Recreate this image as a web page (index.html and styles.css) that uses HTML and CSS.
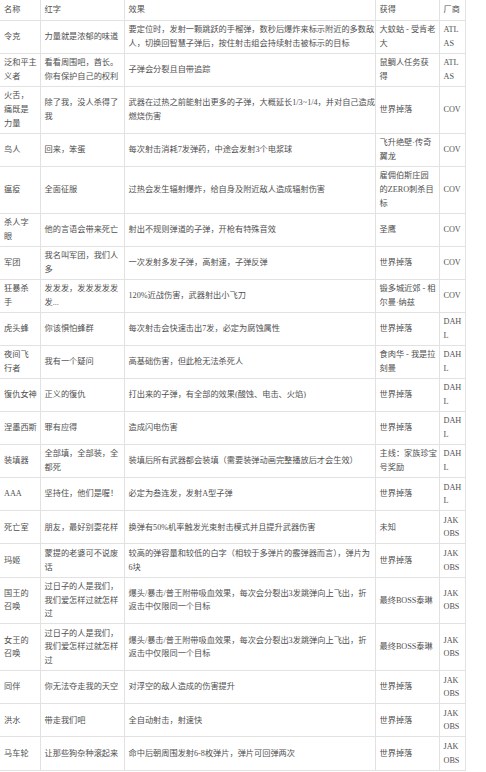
FILE: index.html
```html
<!DOCTYPE html>
<html lang="zh-CN">
<head>
<meta charset="utf-8">
<title>传奇武器</title>
<link rel="stylesheet" href="styles.css">
</head>
<body>
<table class="guns">
  <colgroup>
    <col class="c-name">
    <col class="c-red">
    <col class="c-effect">
    <col class="c-get">
    <col class="c-maker">
  </colgroup>
  <thead>
    <tr><th>名称</th><th>红字</th><th>效果</th><th>获得</th><th>厂商</th></tr>
  </thead>
  <tbody>
    <tr><td>令克</td><td>力量就是浓郁的味道</td><td>要定位时，发射一颗跳跃的手榴弹，数秒后爆炸来标示附近的多数敌<br>人，切换回智慧子弹后，按住射击组会持续射击被标示的目标</td><td>大蚊蛄 - 受肯老<br>大</td><td>ATL<br>AS</td></tr>
    <tr><td>泛和平主<br>义者</td><td>看看周围吧，酋长。<br>你有保护自己的权利</td><td>子弹会分裂且自带追踪</td><td>鼠鲷人任务获<br>得</td><td>ATL<br>AS</td></tr>
    <tr><td>火舌，<br>痛既是<br>力量</td><td>除了我，没人杀得了<br>我</td><td>武器在过热之前能射出更多的子弹，大概延长1/3~1/4，并对自己造成<br>燃烧伤害</td><td>世界掉落</td><td>COV</td></tr>
    <tr><td>鸟人</td><td>回来，笨蛋</td><td>每次射击消耗7发弹药，中途会发射3个电浆球</td><td>飞升绝壁·传奇<br>翼龙</td><td>COV</td></tr>
    <tr><td>瘟疫</td><td>全面征服</td><td>过热会发生辐射爆炸，给自身及附近敌人造成辐射伤害</td><td>雇佣伯斯庄园<br>的ZERO刺杀目<br>标</td><td>COV</td></tr>
    <tr><td>杀人字<br>眼</td><td>他的言语会带来死亡</td><td>射出不规则弹道的子弹，开枪有特殊音效</td><td>圣鹰</td><td>COV</td></tr>
    <tr><td>军团</td><td>我名叫军团，我们人<br>多</td><td>一次发射多发子弹，高射速，子弹反弹</td><td>世界掉落</td><td>COV</td></tr>
    <tr><td>狂暴杀<br>手</td><td>发发发，发发发发发<br>发...</td><td>120%近战伤害，武器射出小飞刀</td><td>锻多城近郊 - 相<br>尔曼·纳兹</td><td>COV</td></tr>
    <tr><td>虎头蜂</td><td>你该惧怕蜂群</td><td>每次射击会快速击出7发，必定为腐蚀属性</td><td>世界掉落</td><td>DAH<br>L</td></tr>
    <tr><td>夜间飞<br>行者</td><td>我有一个疑问</td><td>高基础伤害，但此枪无法杀死人</td><td>食肉华 - 我是拉<br>刻曼</td><td>DAH<br>L</td></tr>
    <tr><td>復仇女神</td><td>正义的復仇</td><td>打出来的子弹，有全部的效果(酸蚀、电击、火焰)</td><td>世界掉落</td><td>DAH<br>L</td></tr>
    <tr><td>涅墨西斯</td><td>罪有应得</td><td>造成闪电伤害</td><td>世界掉落</td><td>DAH<br>L</td></tr>
    <tr><td>装填器</td><td>全部填，全部装，全<br>都死</td><td>装填后所有武器都会装填（需要装弹动画完整播放后才会生效）</td><td>主线：家族珍宝<br>号奖励</td><td>DAH<br>L</td></tr>
    <tr><td>AAA</td><td>坚持住，他们是喔！</td><td>必定为叁连发，发射A型子弹</td><td>世界掉落</td><td>DAH<br>L</td></tr>
    <tr><td>死亡室</td><td>朋友，最好别耍花样</td><td>换弹有50%机率触发光束射击模式并且提升武器伤害</td><td>未知</td><td>JAK<br>OBS</td></tr>
    <tr><td>玛姬</td><td>蒙提的老婆可不说废<br>话</td><td>较高的弹容量和较低的白字（相较于多弹片的霰弹器而言），弹片为<br>6块</td><td>世界掉落</td><td>JAK<br>OBS</td></tr>
    <tr><td>国王的<br>召唤</td><td>过日子的人是我们，<br>我们爱怎样过就怎样<br>过</td><td>爆头/暴击/普王附带吸血效果，每次会分裂出3发跳弹向上飞出，折<br>返击中仅限同一个目标</td><td>最终BOSS泰琳</td><td>JAK<br>OBS</td></tr>
    <tr><td>女王的<br>召唤</td><td>过日子的人是我们，<br>我们爱怎样过就怎样<br>过</td><td>爆头/暴击/普王附带吸血效果，每次会分裂出3发跳弹向上飞出，折<br>返击中仅限同一个目标</td><td>最终BOSS泰琳</td><td>JAK<br>OBS</td></tr>
    <tr><td>同伴</td><td>你无法夺走我的天空</td><td>对浮空的敌人造成的伤害提升</td><td>世界掉落</td><td>JAK<br>OBS</td></tr>
    <tr><td>洪水</td><td>带走我们吧</td><td>全自动射击，射速快</td><td>世界掉落</td><td>JAK<br>OBS</td></tr>
    <tr><td>马车轮</td><td>让那些狗杂种滚起来</td><td>命中后朝周围发射6-8枚弹片，弹片可回弹两次</td><td>世界掉落</td><td>JAK<br>OBS</td></tr>
  </tbody>
</table>
</body>
</html>
```

FILE: styles.css
```css
html, body {
  margin: 0;
  padding: 0;
  background: #ffffff;
}

.guns {
  width: 465px;
  table-layout: fixed;
  border-collapse: collapse;
  font-family: "Liberation Serif", "Noto Sans CJK SC", serif;
  font-size: 8.2px;
  line-height: 13.85px;
  color: #505050;
}

.c-name { width: 40px; }
.c-red { width: 84px; }
.c-effect { width: 251px; }
.c-get { width: 64px; }
.c-maker { width: 26px; }

.guns th,
.guns td {
  border: 1px solid #e2e2e2;
  padding: 2.2px 4px;
  text-align: left;
  vertical-align: middle;
  white-space: nowrap;
  font-weight: normal;
}

.guns th {
  padding-top: 3px;
  padding-bottom: 3px;
  border-top: none;
}

.guns tr > :first-child {
  border-left: none;
}
```
